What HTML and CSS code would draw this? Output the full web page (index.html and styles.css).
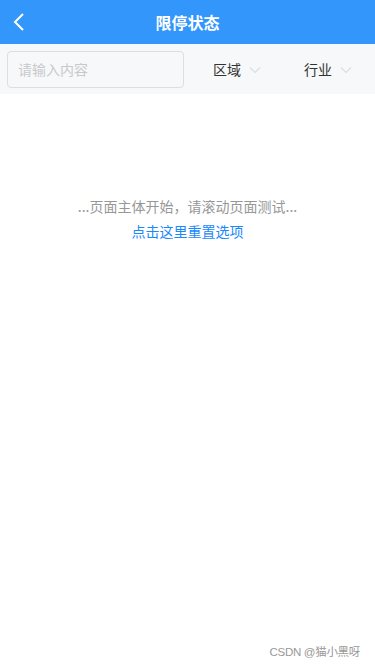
FILE: index.html
```html
<!DOCTYPE html>
<html>
<head>
<meta charset="utf-8">
<link rel="stylesheet" href="styles.css">
</head>
<body>
<div class="page">
  <header class="nav">
    <span class="back"><svg width="12" height="20" viewBox="0 0 12 20"><path d="M10 2 L2 10 L10 18" fill="none" stroke="#fff" stroke-width="2"/></svg></span>
    <h1 class="title">限停状态</h1>
  </header>
  <div class="filters">
    <div class="search">请输入内容</div>
    <div class="drop drop-area">区域<svg class="chev" width="12" height="8" viewBox="0 0 12 8"><path d="M1 1.5 L6 6.5 L11 1.5" fill="none" stroke="#dcdee0" stroke-width="1.2"/></svg></div>
    <div class="drop drop-ind">行业<svg class="chev" width="12" height="8" viewBox="0 0 12 8"><path d="M1 1.5 L6 6.5 L11 1.5" fill="none" stroke="#dcdee0" stroke-width="1.2"/></svg></div>
  </div>
  <main class="body">
    <p class="hint">...页面主体开始，请滚动页面测试...</p>
    <a class="reset">点击这里重置选项</a>
  </main>
  <div class="mark">CSDN @猫小黑呀</div>
</div>
</body>
</html>
```
FILE: styles.css
```css
* { box-sizing: border-box; margin: 0; padding: 0; }
html, body { width: 375px; height: 667px; background: #fff; }
body { font-family: "Microsoft YaHei", "Noto Sans CJK SC", sans-serif; }
.page { position: relative; height: 667px; display: flex; flex-direction: column; }
.nav { height: 44px; background: #3296fa; display: flex; align-items: center; justify-content: center; position: relative; }
.back { position: absolute; left: 13px; top: 12px; display: flex; }
.title { color: #fff; font-size: 16px; font-weight: bold; line-height: 22px; }
.filters { height: 50px; background: #f7f8fa; display: flex; align-items: center; padding-left: 7px; }
.search { width: 177px; height: 37px; border: 1px solid #dcdee0; border-radius: 4px; background: #f7f8fa; color: #c8c9cc; font-size: 14px; line-height: 35px; padding-left: 10px; }
.drop { font-size: 14px; color: #323233; display: flex; align-items: center; gap: 8px; }
.drop-area { margin-left: 29px; }
.drop-ind { margin-left: 43px; }
.chev { margin-top: 1px; }
.body { display: flex; flex-direction: column; align-items: center; padding-top: 102px; }
.hint { font-size: 14px; color: #969799; line-height: 20px; }
.reset { font-size: 14px; color: #1989fa; line-height: 20px; margin-top: 5px; }
.mark { position: absolute; right: 15px; bottom: 8px; font-size: 11.5px; letter-spacing: -0.3px; color: #999; font-family: "Liberation Sans", "Noto Sans CJK SC", sans-serif; }
```
